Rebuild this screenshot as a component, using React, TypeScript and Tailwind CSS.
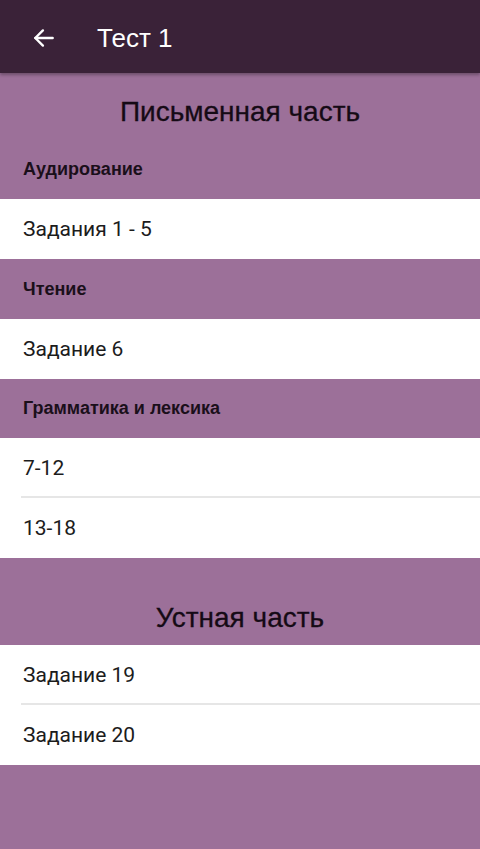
import React from "react";

const heading = { fontFamily: '"Liberation Sans", Arial, sans-serif' };
const body = { fontFamily: 'Roboto, "Liberation Sans", sans-serif' };

function SubHeader({ children, h = "h-[60px]" }: { children: React.ReactNode; h?: string }) {
  return (
    <div className={`${h} flex items-center px-[23px]`}>
      <span className="text-[18px] font-bold text-[#1a0f1a]" style={heading}>
        {children}
      </span>
    </div>
  );
}

function Item({ children, divider = false }: { children: React.ReactNode; divider?: boolean }) {
  return (
    <div className="relative h-[60px] bg-white flex items-center px-[23px] pt-[2px]">
      <span className="text-[21px] text-[#1c1c1c]" style={body}>
        {children}
      </span>
      {divider && <div className="absolute bottom-0 left-[21px] right-0 h-[2px] bg-[#e6e6e6]" />}
    </div>
  );
}

export default function App() {
  return (
    <div className="w-[480px] h-[849px] bg-[#9c7099] flex flex-col overflow-hidden">
      <div className="h-[73px] bg-[#3a2238] flex items-center pt-[3px] shadow-[0_2px_3px_rgba(0,0,0,0.3)] relative z-10">
        <div className="w-[97px] flex pl-[31px]">
          <svg width="26" height="26" viewBox="0 0 24 24" fill="none" stroke="white" strokeWidth="2.2" strokeLinecap="round" strokeLinejoin="round">
            <path d="M20 12H4" />
            <path d="M11 5l-7 7 7 7" />
          </svg>
        </div>
        <span className="text-white text-[26px]" style={heading}>
          Тест 1
        </span>
      </div>
      <div className="h-[67px] pt-[10px] flex items-center justify-center">
        <span className="text-[28px] text-[#150a15] [-webkit-text-stroke:0.3px_#150a15]" style={heading}>
          Письменная часть
        </span>
      </div>
      <SubHeader h="h-[59px]">Аудирование</SubHeader>
      <Item>Задания 1 - 5</Item>
      <SubHeader>Чтение</SubHeader>
      <Item>Задание 6</Item>
      <SubHeader h="h-[59px]">Грамматика и лексика</SubHeader>
      <Item divider>7-12</Item>
      <Item>13-18</Item>
      <div className="h-[87px] pt-[33px] flex items-center justify-center">
        <span className="text-[28px] text-[#150a15] [-webkit-text-stroke:0.3px_#150a15]" style={heading}>
          Устная часть
        </span>
      </div>
      <Item divider>Задание 19</Item>
      <Item>Задание 20</Item>
    </div>
  );
}
